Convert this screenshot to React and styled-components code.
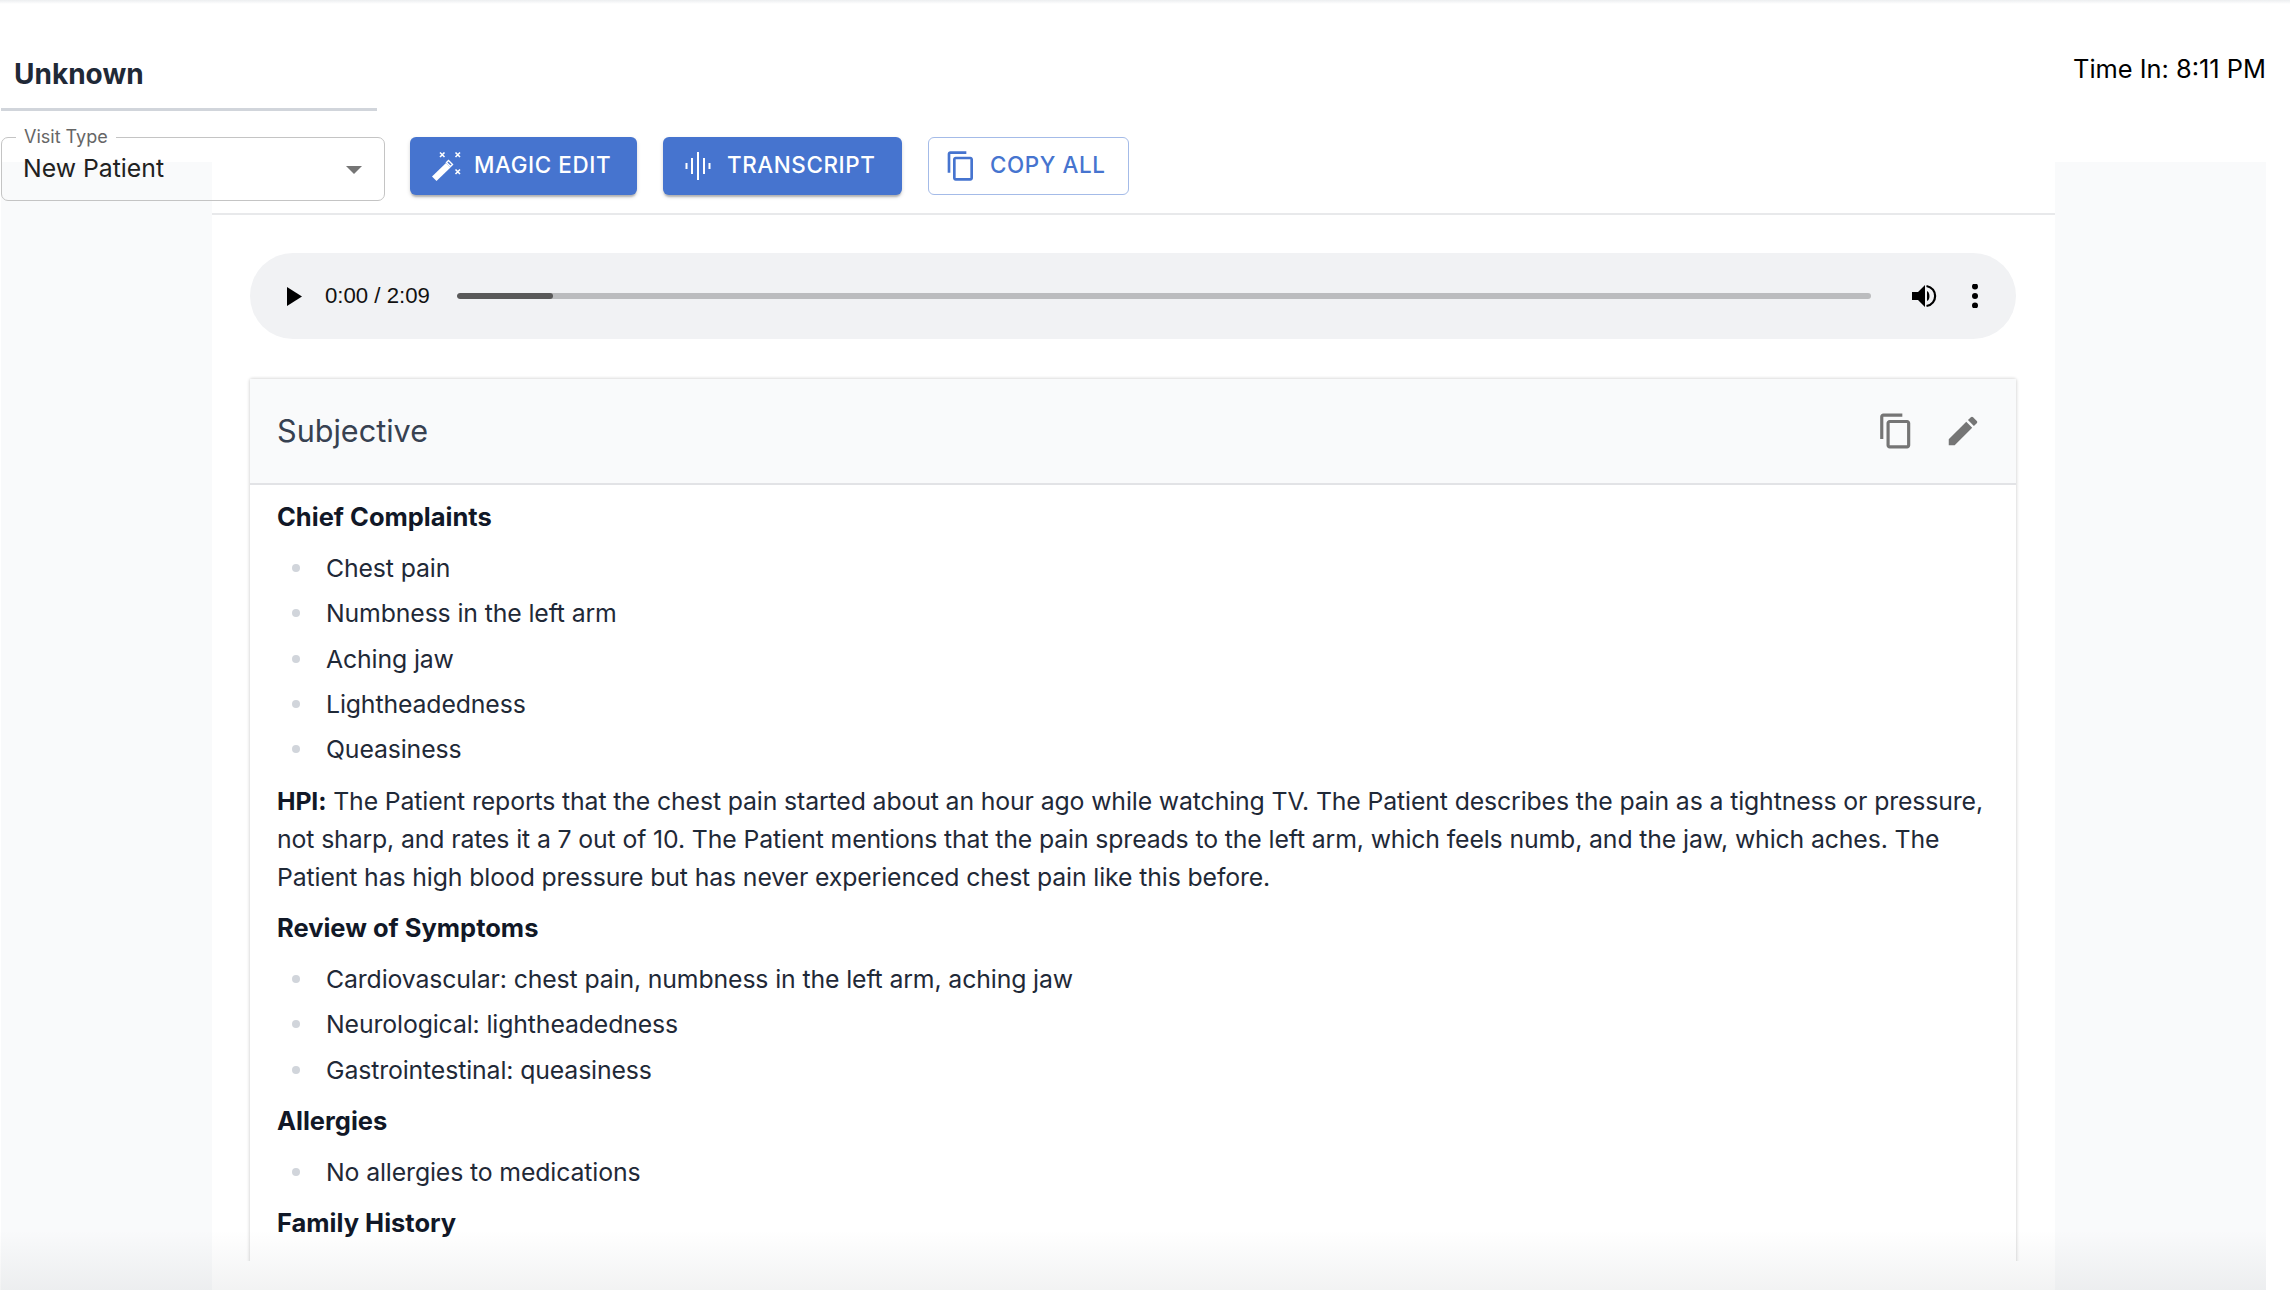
import React from "react";
import styled, { createGlobalStyle } from "styled-components";

const Global = createGlobalStyle`
  html, body { margin: 0; padding: 0; background: #fff; }
  body { font-family: Inter, "Noto Sans", sans-serif; overflow: hidden; }
`;

const Page = styled.div`
  position: relative;
  width: 2290px;
  height: 1290px;
  overflow: hidden;
  background: #fff;
`;
const TopShade = styled.div`
  height: 4px;
  background: linear-gradient(#eceef0, #fff);
`;
const BottomShade = styled.div`
  position: absolute;
  left: 0;
  right: 24px;
  bottom: 0;
  height: 60px;
  pointer-events: none;
  background: linear-gradient(rgba(0,0,0,0), rgba(20,30,40,0.055));
`;
const Header = styled.header`
  display: flex;
  justify-content: space-between;
  height: 133px;
  width: 2266px;
  padding-left: 1px;
  box-sizing: border-box;
`;
const NameBlock = styled.div`
  width: 376px;
  height: 107px;
  box-sizing: border-box;
  border-bottom: 3px solid #d1d5db;
  padding: 50px 0 0 13px;
`;
const Name = styled.h1`
  margin: 0;
  font-size: 28px;
  line-height: 40px;
  font-weight: 700;
  color: #1f2937;
`;
const TimeIn = styled.div`
  padding-top: 47px;
  font-size: 25.4px;
  line-height: 36px;
  font-weight: 400;
  color: #000;
`;
const Workspace = styled.div`
  display: grid;
  grid-template-columns: 211px 1843px 211px;
  width: 2266px;
  height: 1153px;
  padding-left: 1px;
  box-sizing: border-box;
`;
const SidePanel = styled.aside`
  margin-top: 25px;
  background: #f9fafb;
`;
const Center = styled.main`
  display: flex;
  flex-direction: column;
  min-height: 0;
`;
const Toolbar = styled.div`
  display: flex;
  align-items: flex-start;
  gap: 26px;
  height: 78px;
  flex: none;
  box-sizing: border-box;
  border-bottom: 2px solid #e8e9eb;
`;
const SelectBox = styled.div`
  position: relative;
  width: 384px;
  height: 64px;
  margin: 0 -1px 0 -211px;
  box-sizing: border-box;
  border: 1.5px solid #c4c4c4;
  border-radius: 7px;
  display: flex;
  align-items: center;
  justify-content: space-between;
  padding: 0 22px;
`;
const SelectLabel = styled.span`
  position: absolute;
  left: 14px;
  top: -13px;
  padding: 0 8px;
  background: #fff;
  font-size: 18px;
  line-height: 24px;
  color: #666;
`;
const SelectValue = styled.span`
  font-size: 24.8px;
  line-height: 36px;
  margin-top: -2px;
  margin-left: -1px;
  color: #212121;
`;
const Caret = styled.span`
  width: 0;
  height: 0;
  border-left: 8px solid transparent;
  border-right: 8px solid transparent;
  border-top: 8px solid #757575;
  margin-top: 1px;
`;
const Button = styled.button`
  display: flex;
  align-items: center;
  height: 58px;
  width: ${(p) => p.$w}px;
  padding: 0 0 0 ${(p) => p.$pad}px;
  gap: ${(p) => p.$gap}px;
  box-sizing: border-box;
  border-radius: 6px;
  border: ${(p) => (p.$outlined ? "1.5px solid #a4bbe8" : "none")};
  background: ${(p) => (p.$outlined ? "#fff" : "#4674cf")};
  color: ${(p) => (p.$outlined ? "#4674cf" : "#fff")};
  box-shadow: ${(p) =>
    p.$outlined ? "none" : "0 3px 2px -1px rgba(0,0,0,.22), 0 2px 4px rgba(0,0,0,.14)"};
  font-family: Inter, sans-serif;
  font-size: 22.4px;
  font-weight: 500;
  letter-spacing: 0.6px;
  white-space: nowrap;
  line-height: 30px;
  svg { flex: none; }
`;
const ButtonText = styled.span`
  margin-top: -2px;
`;
const Content = styled.div`
  flex: 1;
  min-height: 0;
  padding: 38px 39px 0 38px;
  display: flex;
  flex-direction: column;
  gap: 37px;
`;
const Player = styled.div`
  flex: none;
  height: 86px;
  border-radius: 43px;
  background: #f1f2f4;
  display: flex;
  align-items: center;
  padding-left: 37px;
  font-family: "Liberation Sans", Arial, sans-serif;
  color: #111;
`;
const Time = styled.span`
  margin-left: 23px;
  margin-top: -1px;
  width: 132px;
  font-size: 22.2px;
`;
const Track = styled.div`
  width: 1414px;
  height: 6px;
  border-radius: 3px;
  background: #bbbcbe;
  overflow: hidden;
`;
const Progress = styled.div`
  width: 96px;
  height: 100%;
  border-radius: 3px;
  background: #595959;
`;
const VolumeSlot = styled.span`
  display: flex;
  margin-left: 41px;
`;
const MenuSlot = styled.span`
  display: flex;
  margin-left: 34px;
`;
const CardClip = styled.div`
  height: 885px;
  flex: none;
  overflow: hidden;
  margin: 0 -5px;
  padding: 3px 5px 0;
  box-sizing: border-box;
`;
const Card = styled.section`
  min-height: 1000px;
  background: #fff;
  box-shadow: 0 0 3px 1px rgba(0,0,0,.14);
  border-radius: 3px 3px 0 0;
`;
const CardHeader = styled.div`
  height: 106px;
  box-sizing: border-box;
  background: #f9fafb;
  border-bottom: 2px solid #e2e3e6;
  display: flex;
  align-items: center;
  justify-content: space-between;
  padding: 0 34px 0 27px;
`;
const CardTitle = styled.h2`
  margin: 0;
  font-size: 30.6px;
  font-weight: 400;
  line-height: 44px;
  color: #374151;
`;
const CardActions = styled.div`
  display: flex;
  align-items: center;
  gap: 29px;
  color: #757575;
`;
const CardBody = styled.div`
  padding: 13px 25px 0 27px;
  display: flex;
  flex-direction: column;
  gap: 13.2px;
  font-size: 24.8px;
  letter-spacing: -0.12px;
  line-height: 38px;
  color: #1f2937;
`;
const Heading = styled.div`
  font-weight: 700;
  font-size: 25.5px;
  letter-spacing: 0;
  color: #111827;
`;
const List = styled.ul`
  margin: 0;
  padding: 0;
  list-style: none;
  display: flex;
  flex-direction: column;
  gap: 7.3px;
`;
const Item = styled.li`
  position: relative;
  padding-left: 49px;
  &::before {
    content: "";
    position: absolute;
    left: 15px;
    top: 15px;
    width: 8px;
    height: 8px;
    border-radius: 50%;
    background: #d1d5db;
  }
`;
const Para = styled.p`
  margin: 0;
`;
const Strong = styled.strong`
  font-weight: 700;
  color: #111827;
`;

const Mui = ({ d, size }) => (
  <svg width={size} height={size} viewBox="0 0 24 24" fill="currentColor"><path d={d} /></svg>
);
const COPY = "M16 1H4c-1.1 0-2 .9-2 2v14h2V3h12V1zm3 4H8c-1.1 0-2 .9-2 2v14c0 1.1.9 2 2 2h11c1.1 0 2-.9 2-2V7c0-1.1-.9-2-2-2zm0 16H8V7h11v14z";
const EDIT = "M3 17.25V21h3.75L17.81 9.94l-3.75-3.75L3 17.25zM20.71 7.04c.39-.39.39-1.02 0-1.41l-2.34-2.34a.9959.9959 0 0 0-1.41 0l-1.83 1.83 3.75 3.75 1.83-1.83z";

const WandIcon = () => (
  <svg width="30" height="30" viewBox="0 0 30 30" fill="none">
    <path d="M1 25.5 L15 12 L19.5 16.5 L5.5 30 Z" fill="#fff" />
    <path d="M15.5 11.5 L17.5 9.5 L21.5 13.5 L19.5 15.5 Z" fill="none" stroke="#fff" strokeWidth="1.4" />
    <g stroke="#fff" strokeWidth="1.6">
      <path d="M9 1.5 L13.5 6 M13.5 1.5 L9 6" />
      <path d="M24.5 1.5 L29 6 M29 1.5 L24.5 6" />
      <path d="M24.5 18.5 L29 23 M29 18.5 L24.5 23" />
    </g>
  </svg>
);
const WaveIcon = () => (
  <svg width="26" height="28" viewBox="0 0 26 28" fill="#fff">
    <rect x="0.5" y="11" width="2" height="6" />
    <rect x="6" y="6" width="2" height="16" />
    <rect x="12" y="0" width="2" height="28" />
    <rect x="18" y="6" width="2" height="16" />
    <rect x="23.5" y="11" width="2" height="6" />
  </svg>
);
const PlayIcon = () => (
  <svg width="15" height="19" viewBox="0 0 15 19" fill="#000"><path d="M0 0 L15 9.5 L0 19 Z" /></svg>
);
const VolumeIcon = () => (
  <svg width="25" height="24" viewBox="0 0 25 24" fill="#000">
    <path d="M0 8 H6 L13 1 V23 L6 16 H0 Z" />
    <path d="M15 7 C18 8 18.5 16 15 17 Z" />
    <path d="M14.5 2 C26 4 26 20 14.5 22" fill="none" stroke="#000" strokeWidth="2.2" />
  </svg>
);
const DotsIcon = () => (
  <svg width="8" height="24" viewBox="0 0 8 24" fill="#000">
    <circle cx="4" cy="2.5" r="3" /><circle cx="4" cy="12" r="3" /><circle cx="4" cy="21.5" r="3" />
  </svg>
);

const Bullets = ({ items }) => (
  <List>{items.map((t) => <Item key={t}>{t}</Item>)}</List>
);

export default function App() {
  return (
    <Page>
      <Global />
      <TopShade />
      <Header>
        <NameBlock><Name>Unknown</Name></NameBlock>
        <TimeIn>Time In: 8:11 PM</TimeIn>
      </Header>
      <Workspace>
        <SidePanel />
        <Center>
          <Toolbar>
            <SelectBox>
              <SelectLabel>Visit Type</SelectLabel>
              <SelectValue>New Patient</SelectValue>
              <Caret />
            </SelectBox>
            <Button $w={227} $pad={21} $gap={13}><WandIcon /><ButtonText>MAGIC EDIT</ButtonText></Button>
            <Button $w={239} $pad={22} $gap={16}><WaveIcon /><ButtonText>TRANSCRIPT</ButtonText></Button>
            <Button $outlined $w={201} $pad={16} $gap={13}><Mui d={COPY} size={32} /><ButtonText>COPY ALL</ButtonText></Button>
          </Toolbar>
          <Content>
            <Player>
              <PlayIcon />
              <Time>0:00 / 2:09</Time>
              <Track><Progress /></Track>
              <VolumeSlot><VolumeIcon /></VolumeSlot>
              <MenuSlot><DotsIcon /></MenuSlot>
            </Player>
            <CardClip>
              <Card>
                <CardHeader>
                  <CardTitle>Subjective</CardTitle>
                  <CardActions>
                    <Mui d={COPY} size={38} />
                    <Mui d={EDIT} size={38} />
                  </CardActions>
                </CardHeader>
                <CardBody>
                  <Heading>Chief Complaints</Heading>
                  <Bullets items={["Chest pain", "Numbness in the left arm", "Aching jaw", "Lightheadedness", "Queasiness"]} />
                  <Para>
                    <Strong>HPI:</Strong> The Patient reports that the chest pain started about an hour ago while watching TV. The Patient describes the pain as a tightness or pressure, not sharp, and rates it a 7 out of 10. The Patient mentions that the pain spreads to the left arm, which feels numb, and the jaw, which aches. The Patient has high blood pressure but has never experienced chest pain like this before.
                  </Para>
                  <Heading>Review of Symptoms</Heading>
                  <Bullets items={["Cardiovascular: chest pain, numbness in the left arm, aching jaw", "Neurological: lightheadedness", "Gastrointestinal: queasiness"]} />
                  <Heading>Allergies</Heading>
                  <Bullets items={["No allergies to medications"]} />
                  <Heading>Family History</Heading>
                </CardBody>
              </Card>
            </CardClip>
          </Content>
        </Center>
        <SidePanel />
      </Workspace>
      <BottomShade />
    </Page>
  );
}
